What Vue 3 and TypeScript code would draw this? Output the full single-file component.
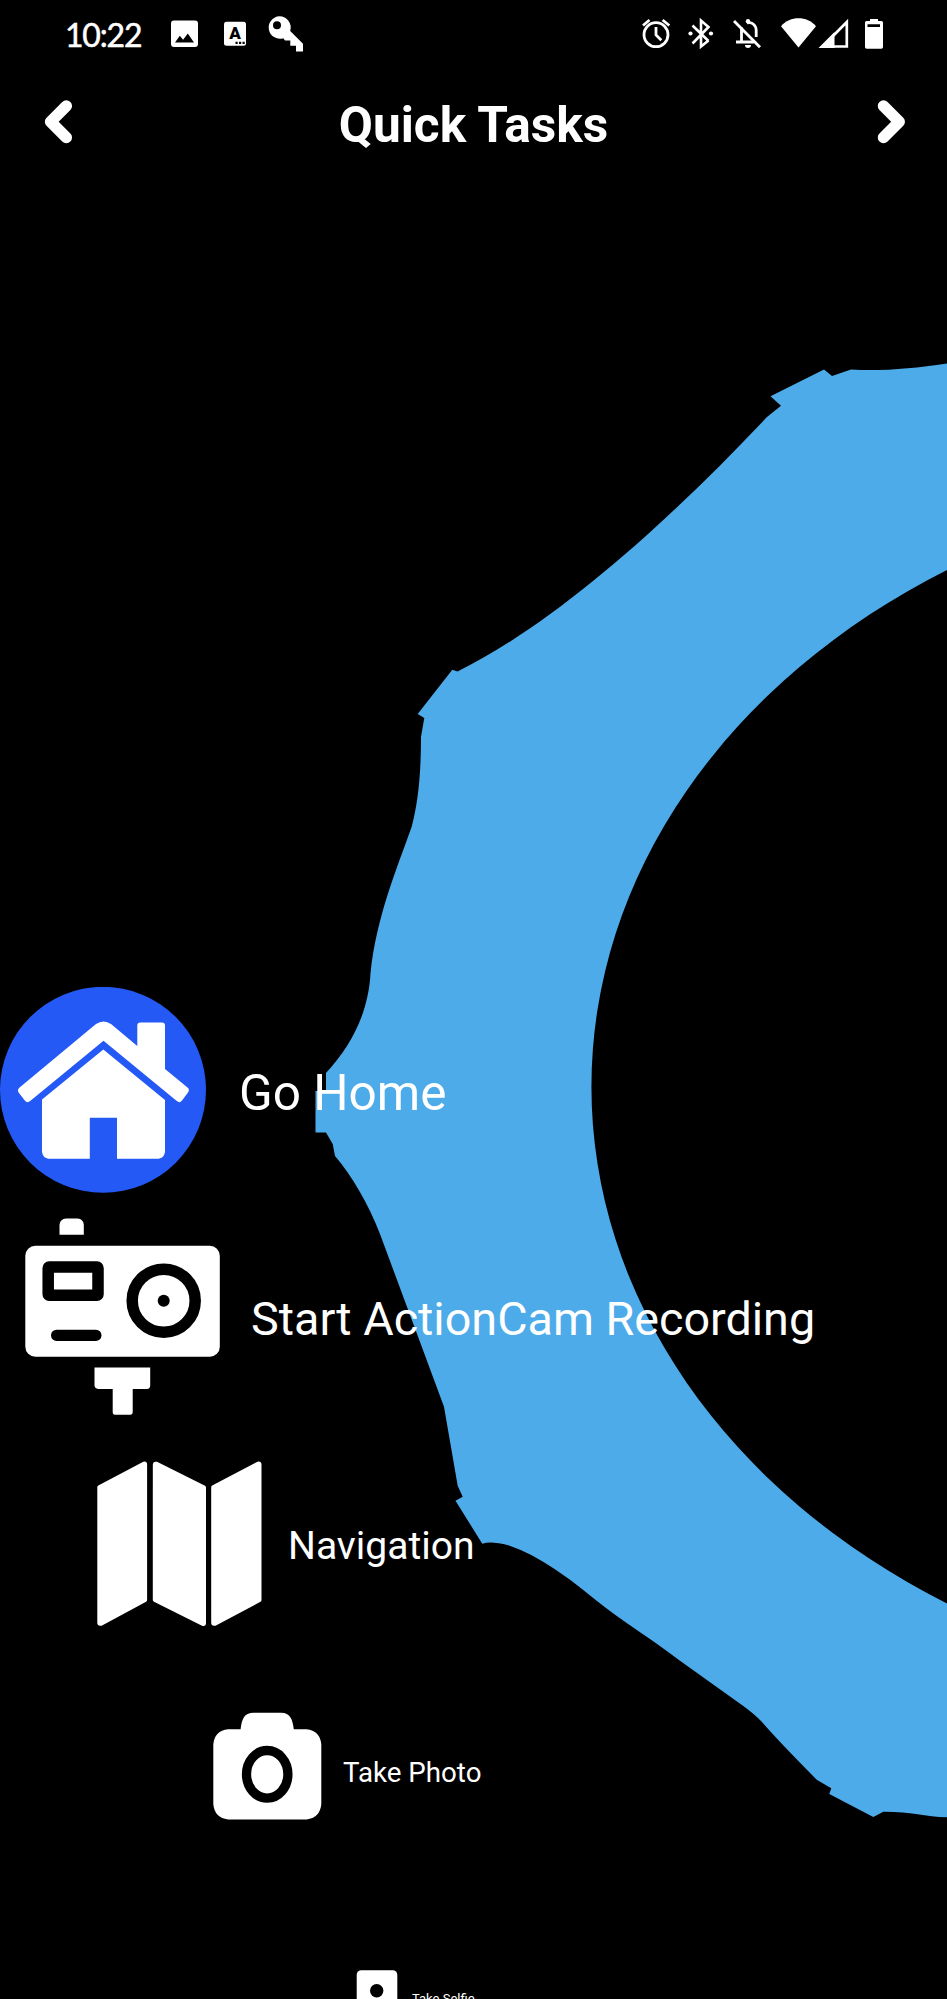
<script setup lang="ts">
interface Task {
  id: string
  label: string
}

const tasks: Task[] = [
  { id: 'home', label: 'Go Home' },
  { id: 'cam', label: 'Start ActionCam Recording' },
  { id: 'map', label: 'Navigation' },
  { id: 'photo', label: 'Take Photo' },
  { id: 'selfie', label: 'Take Selfie' },
]

// The wheel's outer edge from the top right anticlockwise, then the round hub.
const wheelPath = [
  'M960 362L947 363.4C912 368.500 883 371.200 851 369.500',
  'L832 376L824 369.500L770.500 396.300L781 405.700L766.700 417.300',
  'C676 513.500 560 621 457.500 671.500',
  'L452.300 669.700L417.700 714L424.300 718L421 736.700',
  'C421 775 418 803 411.700 826.700C397 868 376 918 370.500 973.300C368.500 1012 352 1045 326 1073',
  'V1091H315.500V1132.600H326L332.700 1144L335 1156',
  'C352 1176 368 1203 380 1234L444 1406.700L457.700 1485.700L462.700 1496.700L455.500 1500.800L482.300 1543.700',
  'Q491 1540.500 508.300 1545.300C540 1556 570 1579 595.700 1600C622 1621 650 1638 680 1660.700',
  'L743.300 1706Q755 1714.500 762 1722Q776 1738.500 816.700 1779.700',
  'L831.300 1788.300L829.300 1794L873.300 1817L883.300 1811.700',
  'C910 1811.500 925 1816.500 947 1817.300H960V1610L947 1603.400',
  'A755.400 609 0 0 1 947 570L960 563Z',
].join('')
</script>

<template>
  <main class="screen">
    <svg class="wheel" viewBox="0 0 947 1999" aria-hidden="true">
      <path :d="wheelPath" fill="#4eabe9" />
    </svg>

    <div class="status">
      <span class="clock">10:22</span>
      <svg class="status-left" viewBox="168 12 138 44">
        <path fill-rule="evenodd" fill="#fff" d="M174 20.5h21q3 0 3 3v20.500q0 3-3 3h-21q-3 0-3-3v-20.500q0-3 3-3zM175 42.500h19l-6.200-9-4.700 6.200-3.300-4z" />
        <rect x="224" y="21.700" width="22" height="24" rx="2.500" fill="#fff" />
        <text x="235" y="38.500" text-anchor="middle" class="glyph">A</text>
        <path d="M235.500 41.700h2.200v2.200h-2.200zM239 41.700h2.200v2.200h-2.200zM242.500 41.700h2.200v2.200h-2.200z" fill="#000" />
        <path fill-rule="evenodd" fill="#fff" d="M279.500 16.200a11.300 11.300 0 0 1 10.700 14.800L303 43.800v7.700h-7v-5.700h-5.700v-5.300h-5.300l-1.700-2.200a11.300 11.300 0 1 1-3.800-22.100zM277 21.300a4 4 0 1 0 0 8 4 4 0 0 0 0-8z" />
      </svg>
      <svg class="status-right" viewBox="638 12 250 44">
        <g fill="none" stroke="#fff" stroke-width="2.800">
          <circle cx="656" cy="34.700" r="12" />
          <path d="M656 27v8l5.300 5.200M643 25.500l6.500-5.500M669.300 25.500l-6.700-5.500" />
          <path stroke-width="2.600" d="M692.500 25.500l16 15.500M692.500 43.500l16-16.500-7.500-6.500v26l7.500-6" />
          <path d="M734 21l26 26.300" />
          <path d="M741.500 27.500v14M736 42h18M747 23c5-1.700 9.200 2.500 9.200 7.500v6.500" />
          <path stroke-width="2.700" d="M833 46.500h13.800V22L833 36" />
        </g>
        <g fill="#fff">
          <circle cx="690.500" cy="33.500" r="2.100" /><circle cx="711" cy="33.500" r="2.100" />
          <circle cx="748" cy="21.300" r="2.200" /><path d="M745 45h6a3 3 0 0 1-6 0z" />
          <path d="M781 26.300C790 15.700 807 15.700 816 26.300L798.500 47.500z" />
          <path d="M818.500 48l16-16v16z" />
          <path fill-rule="evenodd" d="M870 19h8v2h3.500q1.500 0 1.500 1.500v24.500q0 1.700-1.700 1.700h-14.600q-1.700 0-1.700-1.700v-24.500q0-1.500 1.500-1.500h3.500zM867.500 24.300v2.700h12.500v-2.700z" />
        </g>
      </svg>
    </div>

    <header class="bar">
      <svg class="chevron" viewBox="44 98 30 48"><path d="M66.300 106L50.600 121.700L66.300 137.500" /></svg>
      <h1>Quick Tasks</h1>
      <svg class="chevron" viewBox="876 98 30 48"><path d="M883.500 106L899.200 121.700L883.500 137.500" /></svg>
    </header>

    <ul class="tasks">
      <li v-for="task in tasks" :key="task.id" class="task" :class="task.id">
        <svg v-if="task.id === 'home'" class="icon" viewBox="0 987 206 210">
          <circle cx="103" cy="1089.800" r="103" fill="#2459f6" />
          <path fill="#fff" d="M96 1024q7.500-5 15 0l26.300 22v-20.500q0-3 3-3H162q3 0 3 3v43.500l22.500 18.500q2.500 2 .5 5l-6 8q-2.300 3-5.200.5L103.500 1040.700 30.200 1101q-3 2.500-5.400-.5l-6-7.700q-2-2.800.5-5z" />
          <path fill="#fff" d="M103.300 1049.500L165 1100v52q-1 6-6.500 6.700H117v-41H89.800v41H48.500Q43 1158 42 1152v-52.500z" />
        </svg>
        <svg v-else-if="task.id === 'cam'" class="icon" viewBox="25 1218 196 201">
          <g fill="#fff">
            <path d="M59.500 1234.800V1225q.5-6 6.500-6.500h11.500q6 .5 6.300 6.500v9.800z" />
            <rect x="25.300" y="1245.700" width="194.500" height="111" rx="10" />
            <path d="M94.500 1367.500h55.700v18.500q-.5 3-3 3h-14.500v23q0 2.700-2.500 2.700H115q-2.300 0-2.300-2.700v-23H98q-3-.3-3.500-3z" />
          </g>
          <rect x="48.200" y="1267" width="49.800" height="28.200" rx="1" fill="none" stroke="#000" stroke-width="11.500" stroke-linejoin="round" />
          <rect x="51" y="1329.700" width="50.500" height="11.300" rx="5.600" />
          <circle cx="163.700" cy="1300.700" r="31.500" fill="none" stroke="#000" stroke-width="11.500" />
          <circle cx="163.700" cy="1300.700" r="6" />
        </svg>
        <svg v-else-if="task.id === 'map'" class="icon" viewBox="97 1461 165 169">
          <g fill="#fff">
            <path d="M97.300 1487q0-1 1-1.500l45-23.800q3.800-.7 3.800 3V1600q0 1.200-1 1.800l-44.500 23.900q-4.300.8-4.300-3.200z" />
            <path d="M152.800 1465q0-4 4.200-3.200l48 24q1 .7 1 1.800v135.400q0 3.700-4 2.700l-48-23.900q-1.200-.8-1.200-1.800z" />
            <path d="M211.200 1487q0-1 1-1.500l45.300-23.800q4-.7 4 3V1600q0 1.200-1 1.800l-45 23.900q-4.300.8-4.300-3.200z" />
          </g>
        </svg>
        <svg v-else-if="task.id === 'photo'" class="icon" viewBox="213 1712 109 120">
          <path fill="#fff" d="M240.600 1729.200c1.200-10 3.400-16.500 13-16.500h27.400c9.500 0 11.600 7 12.800 16.500h12.700q13.500 1.500 14.800 15v60q-1.300 13.600-14.800 15.200h-78.400q-13.500-1.600-14.800-15.200v-60q1.300-13.500 14.800-15z" />
          <ellipse cx="267.200" cy="1774.300" rx="20.700" ry="23.800" fill="none" stroke="#000" stroke-width="9.300" />
        </svg>
        <svg v-else class="icon" viewBox="356 1970 42 58">
          <rect x="356.700" y="1970.300" width="40.600" height="57" rx="4.500" fill="#fff" />
          <circle cx="376.700" cy="1990.700" r="6.700" />
        </svg>
        <span class="label">{{ task.label }}</span>
      </li>
    </ul>
  </main>
</template>

<style>
html,
body {
  margin: 0;
  background: #000;
}
</style>

<style scoped>
.screen {
  position: relative;
  width: 947px;
  height: 1999px;
  overflow: hidden;
  background: #000;
  color: #fff;
  font-family: Roboto, "Liberation Sans", sans-serif;
}
.wheel {
  position: absolute;
  inset: 0;
  width: 947px;
  height: 1999px;
}
.status,
.bar,
.tasks {
  position: relative;
}
.status {
  display: flex;
  align-items: center;
  height: 68px;
  padding: 0 59px 0 65px;
}
.clock {
  width: 103px;
  padding-top: 2px;
  font: 400 32px/40px Lato, sans-serif;
  letter-spacing: -1.2px;
  -webkit-text-stroke: 0.5px #fff;
}
.status-left {
  width: 138px;
  height: 44px;
}
.status-right {
  width: 250px;
  height: 44px;
  margin-left: auto;
}
.glyph {
  font: 900 17px Roboto, sans-serif;
  fill: #000;
}
.bar {
  display: flex;
  align-items: center;
  justify-content: space-between;
  height: 108px;
  padding: 0 41px 0 44px;
}
.bar h1 {
  margin: 0;
  padding: 5px 3px 0 0;
  font-size: 49.6px;
  line-height: 60px;
  font-weight: 700;
}
.chevron {
  width: 30px;
  height: 48px;
  fill: none;
  stroke: #fff;
  stroke-width: 11.5;
  stroke-linecap: round;
  stroke-linejoin: round;
}
.tasks {
  margin: 802.5px 0 0;
  padding: 0;
  list-style: none;
}
.task {
  display: flex;
  align-items: center;
  height: 226.7px;
  white-space: nowrap;
}
.icon {
  flex: none;
  display: block;
}
.home { gap: 33px; font-size: 49.5px; }
.home .label { padding-top: 2px; }
.home .icon { width: 206px; height: 210px; }
.cam { padding-left: 25px; gap: 30px; font-size: 46.7px; }
.cam .icon { width: 196px; height: 201px; }
.map { padding-left: 97px; gap: 26px; font-size: 39.1px; }
.map .label { padding-top: 2px; }
.map .icon { width: 165px; height: 169px; }
.photo { padding-left: 213px; gap: 21px; font-size: 27.7px; }
.photo .icon { width: 109px; height: 120px; }
.photo .label { padding-top: 1px; }
.selfie { padding-left: 356px; gap: 14px; font-size: 13px; }
.selfie .icon { width: 42px; height: 58px; }
</style>
